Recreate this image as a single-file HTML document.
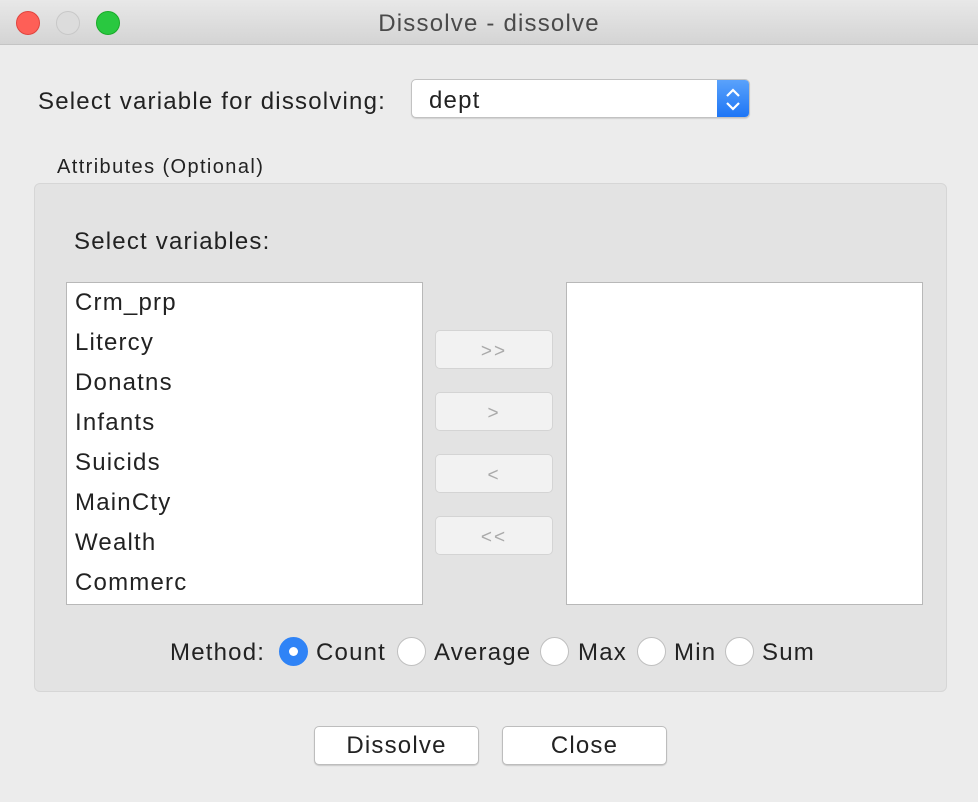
<!DOCTYPE html>
<html><head><style>
body{margin:0;width:978px;height:802px;background:#ececec;font-family:"Liberation Sans",sans-serif;color:#222;position:relative;overflow:hidden}
.a{position:absolute}
.tb{left:0;top:0;width:978px;height:44px;background:linear-gradient(#e8e8e8,#d4d4d4);border-bottom:1px solid #c4c4c4}
.dot{width:24px;height:24px;border-radius:50%;top:11px}
.t{font-size:24px;letter-spacing:1.2px;white-space:nowrap}
.list{background:#fff;border:1px solid #b8b8b8}
.btn{background:#f2f2f2;border:1px solid #d4d4d4;border-radius:5px;color:#aaa;font-size:19px;letter-spacing:2px;text-align:center;line-height:42px;width:116px;height:37px;left:435px}
.pb{background:#fff;border:1px solid #bdbdbd;border-radius:5px;box-shadow:0 1px 1px rgba(0,0,0,.15);height:37px;width:163px;text-align:center;line-height:38px;font-size:24px;letter-spacing:1.2px;top:726px}
.r{width:29px;height:29px;border-radius:50%;background:#fff;border:1px solid #c0c0c0;top:637px;box-sizing:border-box}
</style></head><body>
<div class="a tb"></div>
<div class="a dot" style="left:16px;background:#fe5f57;border:1px solid #e0443e;box-sizing:border-box"></div>
<div class="a dot" style="left:56px;background:#dcdcdc;border:1px solid #c8c8c8;box-sizing:border-box"></div>
<div class="a dot" style="left:96px;background:#29c840;border:1px solid #1aab29;box-sizing:border-box"></div>
<div class="a t" style="left:0;width:978px;text-align:center;top:10px;color:#4a4a4a">Dissolve - dissolve</div>
<div class="a t" style="left:38px;top:88px">Select variable for dissolving:</div>
<div class="a" style="left:411px;top:79px;width:339px;height:39px;background:#fff;border:1px solid #c2c2c2;border-radius:5px;box-sizing:border-box;overflow:hidden;box-shadow:0 1px 1px rgba(0,0,0,.12)">
<div class="a t" style="left:17px;top:7px">dept</div>
<div class="a" style="right:0;top:0;width:32px;height:39px;background:linear-gradient(#5aa2fb,#1a73f5)">
<svg width="32" height="39"><path d="M10 16l6-6 6 6M10 23l6 6 6-6" stroke="#fff" stroke-width="2.2" fill="none"/></svg></div></div>
<div class="a" style="left:57px;top:156px;font-size:20px;letter-spacing:1.4px">Attributes (Optional)</div>
<div class="a" style="left:34px;top:183px;width:911px;height:507px;background:#e3e3e3;border:1px solid #d6d6d6;border-radius:6px"></div>
<div class="a t" style="left:74px;top:228px">Select variables:</div>
<div class="a list" style="left:66px;top:282px;width:355px;height:321px">
<div style="padding:0 0 0 8px;font-size:24px;letter-spacing:1.2px;line-height:40px">Crm_prp<br>Litercy<br>Donatns<br>Infants<br>Suicids<br>MainCty<br>Wealth<br>Commerc</div></div>
<div class="a list" style="left:566px;top:282px;width:355px;height:321px"></div>
<div class="a btn" style="top:330px">&gt;&gt;</div>
<div class="a btn" style="top:392px">&gt;</div>
<div class="a btn" style="top:454px">&lt;</div>
<div class="a btn" style="top:516px">&lt;&lt;</div>
<div class="a t" style="left:170px;top:639px">Method:</div>
<div class="a r" style="left:279px;background:#2f83f6;border-color:#2f83f6"><div class="a" style="left:9px;top:9px;width:9px;height:9px;border-radius:50%;background:#fff"></div></div>
<div class="a t" style="left:316px;top:639px">Count</div>
<div class="a r" style="left:397px"></div>
<div class="a t" style="left:434px;top:639px">Average</div>
<div class="a r" style="left:540px"></div>
<div class="a t" style="left:578px;top:639px">Max</div>
<div class="a r" style="left:637px"></div>
<div class="a t" style="left:674px;top:639px">Min</div>
<div class="a r" style="left:725px"></div>
<div class="a t" style="left:762px;top:639px">Sum</div>
<div class="a pb" style="left:314px">Dissolve</div>
<div class="a pb" style="left:502px">Close</div>
</body></html>
